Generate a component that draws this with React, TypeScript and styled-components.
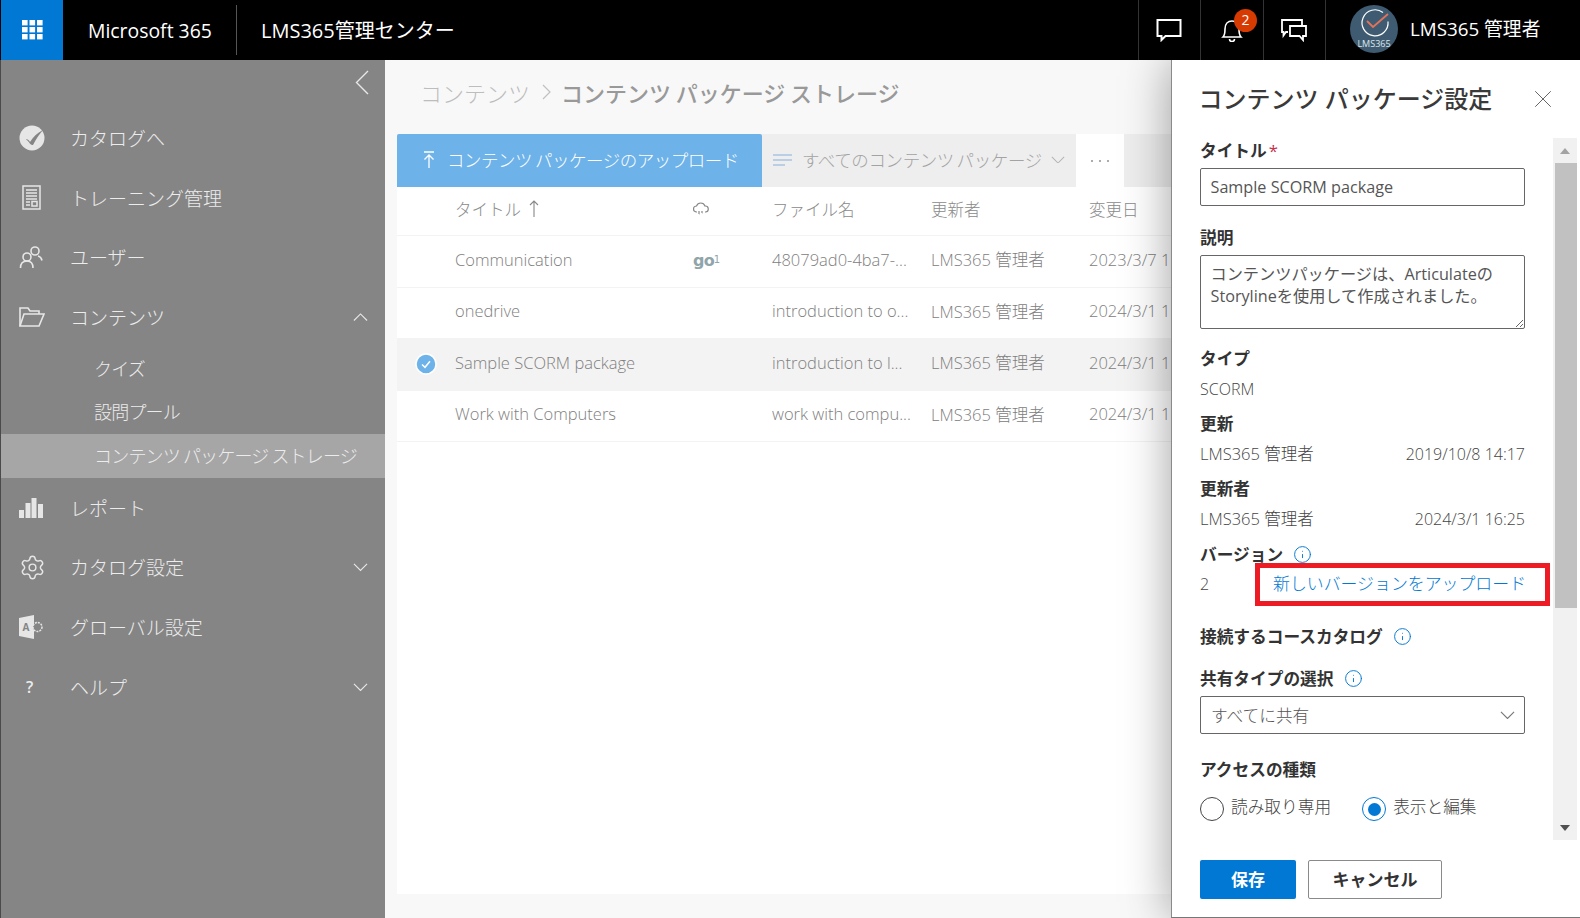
import React from "react";
import styled, { createGlobalStyle } from "styled-components";
import { Info, Settings, X } from "lucide-react";

const GlobalStyle = createGlobalStyle`
  html, body {
    margin: 0;
    height: 100%;
    overflow: hidden;
  }
  body {
    font-family: "Open Sans", "Noto Sans CJK JP", sans-serif;
    background: #f8f8f8;
  }
  * { box-sizing: border-box; }
`;

const rows = [
  { title: "Communication", logo: true, file: "48079ad0-4ba7-...", date: "2023/3/7 1" },
  { title: "onedrive", file: "introduction to o...", date: "2024/3/1 1" },
  { title: "Sample SCORM package", file: "introduction to l...", date: "2024/3/1 1", selected: true },
  { title: "Work with Computers", file: "work with compu...", date: "2024/3/1 1" },
];

function Chevron({ dir, size = 15, color = "#e8e8e8" }: { dir: "up" | "down"; size?: number; color?: string }) {
  const points = dir === "up" ? "1,8 8,1 15,8" : "1,1 8,8 15,1";
  return (
    <svg width={size} height={(size * 9) / 16} viewBox="0 0 16 9" fill="none" stroke={color} strokeWidth="1.2">
      <polyline points={points} />
    </svg>
  );
}

function App() {
  return (
    <>
      <GlobalStyle />
      <Page>
        <TopBar>
          <Waffle>
            <svg width="21" height="20" viewBox="0 0 21 20" fill="#fff">
              {[0, 7.5, 15].map((x) =>
                [0, 7, 14].map((y) => <rect key={`${x}-${y}`} x={x} y={y} width="5.6" height="5.4" />)
              )}
            </svg>
          </Waffle>
          <Brand>Microsoft 365</Brand>
          <BarDivider />
          <AppName>LMS365管理センター</AppName>
          <TopActions>
            <TopAction>
              <svg width="26" height="24" viewBox="0 0 26 24" fill="none" stroke="#fff" strokeWidth="2">
                <path d="M1.5 2h23v16H9.5l-4 4v-4h-4z" />
              </svg>
            </TopAction>
            <TopAction>
              <svg width="22" height="24" viewBox="0 0 22 24" fill="none" stroke="#fff" strokeWidth="1.6">
                <path d="M2 19c2-2 2-4 2-8 0-5 3-8 7-8s7 3 7 8c0 4 0 6 2 8z" />
                <path d="M8.5 21a2.5 2.5 0 0 0 5 0" />
              </svg>
              <Badge>2</Badge>
            </TopAction>
            <TopAction>
              <svg width="26" height="24" viewBox="0 0 26 24" fill="none" stroke="#fff" strokeWidth="1.8">
                <path d="M7 14H5l-2.5 3.5V14H1V2h20v5" />
                <path d="M9 8h16v10h-3v4l-3.500-4H9z" />
              </svg>
            </TopAction>
            <UserBox>
              <Avatar>
                <svg width="48" height="48" viewBox="0 0 48 48" fill="none">
                  <path d="M33 7.500a13 13 0 1 0 5 9" stroke="#fff" strokeWidth="1.2" />
                  <path d="M17 16l6 6L38 9" stroke="#e2735a" strokeWidth="1.800" />
                  <text x="24" y="42" fill="#dfe6ea" fontSize="9" textAnchor="middle" fontFamily="Open Sans">
                    LMS365
                  </text>
                </svg>
              </Avatar>
              <UserName>LMS365 管理者</UserName>
            </UserBox>
          </TopActions>
        </TopBar>

        <Body>
          <Sidebar>
            <CollapseRow>
              <svg width="14" height="25" viewBox="0 0 14 25" fill="none" stroke="#e8e8e8" strokeWidth="1.4">
                <polyline points="13,1 1.500,12.500 13,24" />
              </svg>
            </CollapseRow>
            <NavRow>
              <NavIcon>
                <svg width="26" height="26" viewBox="0 0 26 26">
                  <circle cx="13" cy="13" r="12.500" fill="#e6e6e6" />
                  <path d="M7 14.500c1.500-.5 2.800.5 4 2.500 3-5 7-9 13-12-3.500 4-7 9-10 15-1.500 0-2.500-.5-3.500-2-1-1.500-2-2.800-3.500-3.500z" fill="#858585" />
                </svg>
              </NavIcon>
              <NavText>カタログへ</NavText>
            </NavRow>
            <NavRow>
              <NavIcon>
                <DocIconBox>
                  <svg width="19" height="25" viewBox="0 0 19 25" fill="none" stroke="#e6e6e6" strokeWidth="1.5">
                    <rect x="1" y="1" width="17" height="23" />
                    <path d="M4 5h11M4 8h11M4 11h11M4 14h11M4 17h4M4 20h4" />
                    <rect x="10" y="16.500" width="5" height="4.500" />
                  </svg>
                </DocIconBox>
              </NavIcon>
              <NavText>トレーニング管理</NavText>
            </NavRow>
            <NavRow>
              <NavIcon>
                <svg width="24" height="24" viewBox="0 0 24 24" fill="none" stroke="#e6e6e6" strokeWidth="1.6">
                  <circle cx="16" cy="6" r="4" />
                  <circle cx="8" cy="12" r="4" />
                  <path d="M1.500 23c0-4 2-7 6.500-7s6 3 6 7M19 11c2 .5 3.500 2 4 4.500" />
                </svg>
              </NavIcon>
              <NavText>ユーザー</NavText>
            </NavRow>
            <NavRow>
              <NavIcon>
                <svg width="26" height="20" viewBox="0 0 26 20" fill="none" stroke="#e6e6e6" strokeWidth="1.6">
                  <path d="M1 19V1h8l2 3h9v3" />
                  <path d="M1 19l4-12h20l-5 12z" />
                </svg>
              </NavIcon>
              <NavText>コンテンツ</NavText>
              <NavChevron>
                <Chevron dir="up" />
              </NavChevron>
            </NavRow>
            <SubRow>クイズ</SubRow>
            <SubRow>設問プール</SubRow>
            <SubRow $active>コンテンツ パッケージ ストレージ</SubRow>
            <NavRow>
              <NavIcon>
                <svg width="24" height="20" viewBox="0 0 24 20" fill="#e6e6e6">
                  <rect x="0" y="12" width="5" height="8" />
                  <rect x="6.500" y="5" width="5" height="15" />
                  <rect x="12.500" y="0" width="5" height="20" />
                  <rect x="19" y="6" width="5" height="14" />
                </svg>
              </NavIcon>
              <NavText>レポート</NavText>
            </NavRow>
            <NavRow>
              <NavIcon>
                <Settings size={27} strokeWidth={1.3} color="#e6e6e6" />
              </NavIcon>
              <NavText>カタログ設定</NavText>
              <NavChevron>
                <Chevron dir="down" />
              </NavChevron>
            </NavRow>
            <NavRow>
              <NavIcon>
                <svg width="25" height="24" viewBox="0 0 25 24">
                  <path d="M0 3l15-3v24L0 21z" fill="#e6e6e6" />
                  <text x="3.500" y="16" fontSize="10" fontWeight="700" fill="#858585" fontFamily="Open Sans">
                    A
                  </text>
                  <circle cx="18.500" cy="12" r="4.500" fill="#858585" stroke="#e6e6e6" strokeWidth="1.5" strokeDasharray="2 1" />
                </svg>
              </NavIcon>
              <NavText>グローバル設定</NavText>
            </NavRow>
            <NavRow>
              <NavIcon>
                <HelpMark>?</HelpMark>
              </NavIcon>
              <NavText>ヘルプ</NavText>
              <NavChevron>
                <Chevron dir="down" />
              </NavChevron>
            </NavRow>
          </Sidebar>

          <Main>
            <Breadcrumb>
              <CrumbParent>コンテンツ</CrumbParent>
              <svg width="9" height="16" viewBox="0 0 9 16" fill="none" stroke="#c0c0c0" strokeWidth="1.200">
                <polyline points="1,1 8,8 1,15" />
              </svg>
              <CrumbCurrent>コンテンツ パッケージ ストレージ</CrumbCurrent>
            </Breadcrumb>
            <Sheet>
              <Toolbar>
                <UploadButton>
                  <svg width="14" height="18" viewBox="0 0 14 18" fill="none" stroke="#fff" strokeWidth="1.300">
                    <path d="M2 1h10M7 17V4M2.500 8.500L7 4l4.500 4.500" />
                  </svg>
                  コンテンツ パッケージのアップロード
                </UploadButton>
                <FilterButton>
                  <svg width="19" height="12" viewBox="0 0 19 12" fill="none" stroke="#a9c4e4" strokeWidth="1.500">
                    <path d="M0 1h19M0 6h19M0 11h12" />
                  </svg>
                  <span>すべてのコンテンツ パッケージ</span>
                  <Chevron dir="down" size={14} color="#b5b5b5" />
                </FilterButton>
                <MoreButton>
                  <svg width="20" height="4" viewBox="0 0 20 4" fill="#999">
                    <circle cx="2" cy="2" r="1.100" />
                    <circle cx="10" cy="2" r="1.100" />
                    <circle cx="18" cy="2" r="1.100" />
                  </svg>
                </MoreButton>
              </Toolbar>
              <HeaderRow>
                <span />
                <HeaderCell>
                  タイトル
                  <svg width="10" height="18" viewBox="0 0 10 18" fill="none" stroke="#888" strokeWidth="1.100">
                    <path d="M5 17V1M1 5l4-4 4 4" />
                  </svg>
                </HeaderCell>
                <HeaderCell>
                  <svg width="16" height="14" viewBox="0 0 16 14" fill="none" stroke="#888" strokeWidth="1.200">
                    <path d="M4 10H3.500a3 3 0 0 1 0-6 4.500 4.500 0 0 1 8.500 0 3 3 0 0 1 .5 6H12" />
                    <path d="M6 9v3M9 9v2M6 12h.5M9 11h.5" />
                  </svg>
                </HeaderCell>
                <HeaderCell>ファイル名</HeaderCell>
                <HeaderCell>更新者</HeaderCell>
                <HeaderCell>変更日</HeaderCell>
              </HeaderRow>
              {rows.map((row) => (
                <TableRow key={row.title} $selected={row.selected}>
                  <CheckCell>{row.selected && <RowCheck />}</CheckCell>
                  <Cell>{row.title}</Cell>
                  <Cell>
                    {row.logo && (
                      <GoLogo>
                        go<sup>1</sup>
                      </GoLogo>
                    )}
                  </Cell>
                  <Cell>{row.file}</Cell>
                  <Cell>LMS365 管理者</Cell>
                  <Cell>{row.date}</Cell>
                </TableRow>
              ))}
            </Sheet>
          </Main>

          <Panel>
            <PanelHeader>
              <PanelTitle>コンテンツ パッケージ設定</PanelTitle>
              <CloseIcon>
                <X size={30} strokeWidth={0.8} color="#666" />
              </CloseIcon>
            </PanelHeader>
            <PanelBody>
              <Form>
                <Label>
                  タイトル<Required>*</Required>
                </Label>
                <TextInput readOnly value="Sample SCORM package" />
                <Label $top={19}>説明</Label>
                <TextArea
                  readOnly
                  value={"コンテンツパッケージは、Articulateの\nStorylineを使用して作成されました。"}
                />
                <Label $top={17}>タイプ</Label>
                <Value $top={7}>SCORM</Value>
                <Label $top={10}>更新</Label>
                <SplitValue $top={7}>
                  <span>LMS365 管理者</span>
                  <span>2019/10/8 14:17</span>
                </SplitValue>
                <Label $top={10}>更新者</Label>
                <SplitValue $top={7}>
                  <span>LMS365 管理者</span>
                  <span>2024/3/1 16:25</span>
                </SplitValue>
                <Label $top={11}>
                  バージョン
                  <InfoIcon>
                    <Info size={19} strokeWidth={1.2} color="#0078d4" />
                  </InfoIcon>
                </Label>
                <VersionRow>
                  <span>2</span>
                  <VersionLink>新しいバージョンをアップロード</VersionLink>
                </VersionRow>
                <Label $top={28}>
                  接続するコースカタログ
                  <InfoIcon>
                    <Info size={19} strokeWidth={1.2} color="#0078d4" />
                  </InfoIcon>
                </Label>
                <Label $top={18}>
                  共有タイプの選択
                  <InfoIcon>
                    <Info size={19} strokeWidth={1.2} color="#0078d4" />
                  </InfoIcon>
                </Label>
                <SelectBox>
                  すべてに共有
                  <Chevron dir="down" size={15} color="#777" />
                </SelectBox>
                <Label $top={23}>アクセスの種類</Label>
                <RadioRow>
                  <RadioItem>
                    <RadioDot />
                    <RadioText>読み取り専用</RadioText>
                  </RadioItem>
                  <RadioItem>
                    <RadioDot $checked />
                    <RadioText>表示と編集</RadioText>
                  </RadioItem>
                </RadioRow>
              </Form>
              <ScrollTrack>
                <ScrollArrow />
                <ScrollThumb />
                <ScrollArrow $down />
              </ScrollTrack>
            </PanelBody>
            <PanelFooter>
              <SaveButton>保存</SaveButton>
              <CancelButton>キャンセル</CancelButton>
            </PanelFooter>
          </Panel>
        </Body>
      </Page>
    </>
  );
}

export default App;

const Page = styled.div`
  display: flex;
  flex-direction: column;
  height: 918px;
  width: 1580px;
  overflow: hidden;
`;
const TopBar = styled.div`
  display: flex;
  align-items: center;
  height: 60px;
  background: #000;
  color: #fff;
  position: relative;
  z-index: 3;
`;
const Waffle = styled.div`
  width: 62px;
  height: 60px;
  margin-left: 1px;
  background: #0078d4;
  display: flex;
  align-items: center;
  justify-content: center;
`;
const Brand = styled.div`
  margin-left: 25px;
  font-size: 19.400px;
  width: 148px;
`;
const BarDivider = styled.div`
  width: 1px;
  height: 50px;
  background: #555;
`;
const AppName = styled.div`
  margin-left: 24px;
  padding-bottom: 1px;
  font-size: 20px;
`;
const TopActions = styled.div`
  display: flex;
  align-items: stretch;
  height: 60px;
  margin-left: auto;
`;
const TopAction = styled.div`
  width: 62.5px;
  border-left: 1px solid #333;
  display: flex;
  align-items: center;
  justify-content: center;
  position: relative;
`;
const Badge = styled.span`
  position: absolute;
  left: 33px;
  top: 9px;
  width: 23px;
  height: 23px;
  border-radius: 50%;
  background: #d83b01;
  font-size: 14px;
  line-height: 22px;
  text-align: center;
`;
const UserBox = styled.div`
  width: 255px;
  border-left: 1px solid #333;
  display: flex;
  align-items: center;
  padding-left: 24px;
`;
const Avatar = styled.div`
  width: 48px;
  height: 48px;
  border-radius: 50%;
  background: #3e5b72;
  margin-right: 12px;
  margin-bottom: 2px;
  display: flex;
`;
const UserName = styled.div`
  font-size: 18.800px;
  padding-bottom: 4px;
`;
const Body = styled.div`
  flex: 1;
  display: flex;
  min-height: 0;
`;
const Sidebar = styled.nav`
  width: 385px;
  flex: none;
  background: #858585;
  border-left: 1px solid #4a4a4a;
  color: #ececec;
`;
const CollapseRow = styled.div`
  height: 48px;
  display: flex;
  align-items: center;
  justify-content: flex-end;
  padding: 0 16px 3px 0;
`;
const NavRow = styled.div`
  height: 59.800px;
  display: flex;
  align-items: center;
  padding-right: 17px;
`;
const NavIcon = styled.div`
  width: 69px;
  padding-left: 18px;
  display: flex;
  align-items: center;
`;
const DocIconBox = styled.span`
  display: flex;
  margin-left: 3px;
`;
const NavText = styled.div`
  font-size: 19px;
  font-weight: 300;
`;
const NavChevron = styled.div`
  margin-left: auto;
  display: flex;
`;
const HelpMark = styled.span`
  margin-left: 7px;
  font-size: 16px;
  font-weight: 600;
`;
const SubRow = styled.div<{ $active?: boolean }>`
  height: 43.500px;
  display: flex;
  align-items: center;
  padding: 0 0 2px 93px;
  font-size: 18px;
  font-weight: 300;
  letter-spacing: -0.8px;
  word-spacing: -1px;
  background: ${(p) => (p.$active ? "#a6a6a6" : "transparent")};
`;
const Main = styled.main`
  flex: 1;
  min-width: 0;
  overflow: hidden;
  display: flex;
  flex-direction: column;
  background: #f8f8f8;
  padding-left: 12px;
`;
const Breadcrumb = styled.div`
  height: 74px;
  flex: none;
  display: flex;
  align-items: center;
  gap: 12px;
  padding: 0 0 10px 23px;
  font-size: 22px;
`;
const CrumbParent = styled.span`
  color: #bdbdbd;
  font-weight: 300;
`;
const CrumbCurrent = styled.span`
  color: #999;
  font-weight: 500;
  margin-left: -2px;
  word-spacing: -1px;
`;
const Sheet = styled.div`
  width: 790px;
  height: 760px;
  flex: none;
  background: #fff;
  color: #808080;
`;
const Toolbar = styled.div`
  display: flex;
  height: 53px;
  background: #eeeeee;
  font-size: 17.500px;
`;
const UploadButton = styled.div`
  width: 365px;
  display: flex;
  align-items: center;
  gap: 11px;
  padding: 0 0 2px 25px;
  background: #6db2e8;
  color: #fff;
  font-weight: 300;
  letter-spacing: -0.5px;
  word-spacing: -1px;
  border-radius: 2px 2px 0 0;
`;
const FilterButton = styled.div`
  width: 314px;
  display: flex;
  align-items: center;
  padding: 0 0 2px 11px;
  color: #a3a3a3;
  font-weight: 300;
  letter-spacing: -0.4px;
  word-spacing: -1.500px;
  > span {
    margin: 0 9px 0 10px;
  }
`;
const MoreButton = styled.div`
  width: 48px;
  background: #fff;
  display: flex;
  align-items: center;
  justify-content: center;
`;
const tableColumns = "58px 238px 79px 159px 158px 1fr";
const HeaderRow = styled.div`
  display: grid;
  grid-template-columns: ${tableColumns};
  height: 49px;
  align-items: center;
  padding-bottom: 4px;
  border-bottom: 1px solid #f3f3f3;
  font-size: 16.500px;
  font-weight: 300;
`;
const HeaderCell = styled.div`
  display: flex;
  align-items: center;
  gap: 8px;
  color: #8a8a8a;
`;
const TableRow = styled.div<{ $selected?: boolean }>`
  display: grid;
  grid-template-columns: ${tableColumns};
  height: 51.500px;
  align-items: center;
  padding-bottom: 4px;
  border-bottom: 1px solid #f3f3f3;
  font-size: 16.500px;
  background: ${(p) => (p.$selected ? "#f3f3f3" : "#fff")};
`;
const Cell = styled.div`
  white-space: nowrap;
  overflow: hidden;
  font-weight: 300;
`;
const CheckCell = styled.div`
  display: flex;
  justify-content: center;
  padding-top: 4px;
`;
const GoLogo = styled.span`
  font-family: "DejaVu Sans", sans-serif;
  font-size: 16px;
  font-weight: 700;
  color: #8fa5aa;
  letter-spacing: -0.8px;
  > sup {
    font-size: 10px;
    font-weight: 400;
    line-height: 0;
    vertical-align: 3px;
  }
`;
function RowCheck() {
  return (
    <svg width="22" height="22" viewBox="0 0 22 22">
      <circle cx="11" cy="11" r="10" fill="#6db2e8" stroke="#fff" strokeWidth="1.500" />
      <path d="M7 11.500l3 2.800 5-6" fill="none" stroke="#fff" strokeWidth="1.500" />
    </svg>
  );
}
const Panel = styled.aside`
  width: 409px;
  flex: none;
  display: flex;
  flex-direction: column;
  background: #fff;
  border-left: 1px solid #8a8a8a;
  border-bottom: 1px solid #777;
  box-shadow: 0 0 45px rgba(0, 0, 0, 0.38);
  position: relative;
  z-index: 2;
  color: #444;
`;
const PanelHeader = styled.div`
  height: 78px;
  flex: none;
  display: flex;
  align-items: center;
  padding: 0 22px 4px 26.500px;
`;
const PanelTitle = styled.h2`
  margin: 0;
  font-size: 24px;
  font-weight: 500;
  color: #3a3a3a;
`;
const CloseIcon = styled.div`
  margin-left: auto;
  display: flex;
  margin-top: 4px;
`;
const PanelBody = styled.div`
  height: 702px;
  flex: none;
  display: flex;
`;
const Form = styled.div`
  width: 382px;
  padding: 0 0 0 28px;
  overflow: hidden;
`;
const Label = styled.div<{ $top?: number }>`
  display: flex;
  align-items: center;
  height: 24px;
  width: 325px;
  margin-top: ${(p) => p.$top ?? 0}px;
  font-size: 16.700px;
  font-weight: 700;
  color: #333;
`;
const Required = styled.span`
  color: #c4314b;
  margin-left: 2px;
  font-weight: 400;
`;
const InfoIcon = styled.span`
  display: flex;
  margin-left: 10px;
`;
const TextInput = styled.input`
  display: block;
  width: 325px;
  height: 38px;
  margin-top: 6px;
  padding: 0 9.500px;
  border: 1px solid #666;
  border-radius: 2px;
  font: inherit;
  font-size: 16.200px;
  color: #555;
  outline: none;
`;
const TextArea = styled.textarea`
  display: block;
  width: 325px;
  height: 74px;
  margin-top: 6px;
  padding: 7px 9.500px;
  border: 1px solid #666;
  border-radius: 2px;
  font: inherit;
  font-size: 16.200px;
  line-height: 22px;
  color: #555;
  outline: none;
`;
const Value = styled.div<{ $top?: number }>`
  height: 24px;
  width: 325px;
  margin-top: ${(p) => p.$top ?? 0}px;
  font-size: 16px;
  line-height: 24px;
  font-weight: 300;
`;
const SplitValue = styled(Value)`
  display: flex;
  justify-content: space-between;
  > span:first-child {
    font-size: 16.500px;
  }
`;
const VersionRow = styled.div`
  position: relative;
  height: 24px;
  width: 325px;
  margin-top: 6px;
  font-size: 16px;
  line-height: 24px;
  font-weight: 300;
`;
const VersionLink = styled.a`
  position: absolute;
  left: 55px;
  top: -9px;
  width: 295px;
  height: 43px;
  border: 5px solid #ed1c24;
  padding-left: 13px;
  line-height: 31px;
  color: #0078d4;
  font-size: 16.900px;
  white-space: nowrap;
`;
const SelectBox = styled.div`
  width: 325px;
  height: 38px;
  margin-top: 6px;
  padding: 0 9px 0 10px;
  display: flex;
  align-items: center;
  justify-content: space-between;
  border: 1px solid #666;
  border-radius: 2px;
  font-size: 16.700px;
  font-weight: 300;
  color: #555;
`;
const RadioRow = styled.div`
  display: flex;
  gap: 31px;
  margin-top: 16px;
`;
const RadioItem = styled.div`
  display: flex;
  align-items: center;
  gap: 7px;
  font-size: 16.700px;
  font-weight: 300;
`;
const RadioText = styled.span`
  margin-top: -6px;
`;
const RadioDot = styled.span<{ $checked?: boolean }>`
  width: 24px;
  height: 24px;
  border-radius: 50%;
  border: 1px solid ${(p) => (p.$checked ? "#0078d4" : "#444")};
  display: flex;
  align-items: center;
  justify-content: center;
  &::after {
    content: "";
    width: 13px;
    height: 13px;
    border-radius: 50%;
    background: ${(p) => (p.$checked ? "#0078d4" : "transparent")};
  }
`;
const ScrollTrack = styled.div`
  width: 24px;
  margin-left: -1px;
  background: #f1f1f1;
  display: flex;
  flex-direction: column;
`;
const ScrollArrow = styled.div<{ $down?: boolean }>`
  height: 25px;
  flex: none;
  display: flex;
  align-items: center;
  justify-content: center;
  &::after {
    content: "";
    border-left: 5.500px solid transparent;
    border-right: 5.500px solid transparent;
    ${(p) => (p.$down ? "border-top: 6px solid #505050;" : "border-bottom: 6px solid #a3a3a3;")}
  }
`;
const ScrollThumb = styled.div`
  height: 445px;
  margin: 0 0 auto 2px;
  background: #c1c1c1;
`;
const PanelFooter = styled.div`
  flex: 1;
  display: flex;
  align-items: flex-start;
  gap: 12px;
  padding: 20px 0 0 28px;
`;
const SaveButton = styled.button`
  width: 96px;
  height: 39px;
  border: none;
  border-radius: 2px;
  background: #0078d4;
  color: #fff;
  font: inherit;
  font-size: 17px;
  font-weight: 700;
  padding-bottom: 3px;
`;
const CancelButton = styled.button`
  width: 134px;
  height: 39px;
  border: 1px solid #8a8a8a;
  border-radius: 2px;
  background: #fff;
  color: #333;
  font: inherit;
  font-size: 17px;
  font-weight: 700;
  padding-bottom: 3px;
`;
